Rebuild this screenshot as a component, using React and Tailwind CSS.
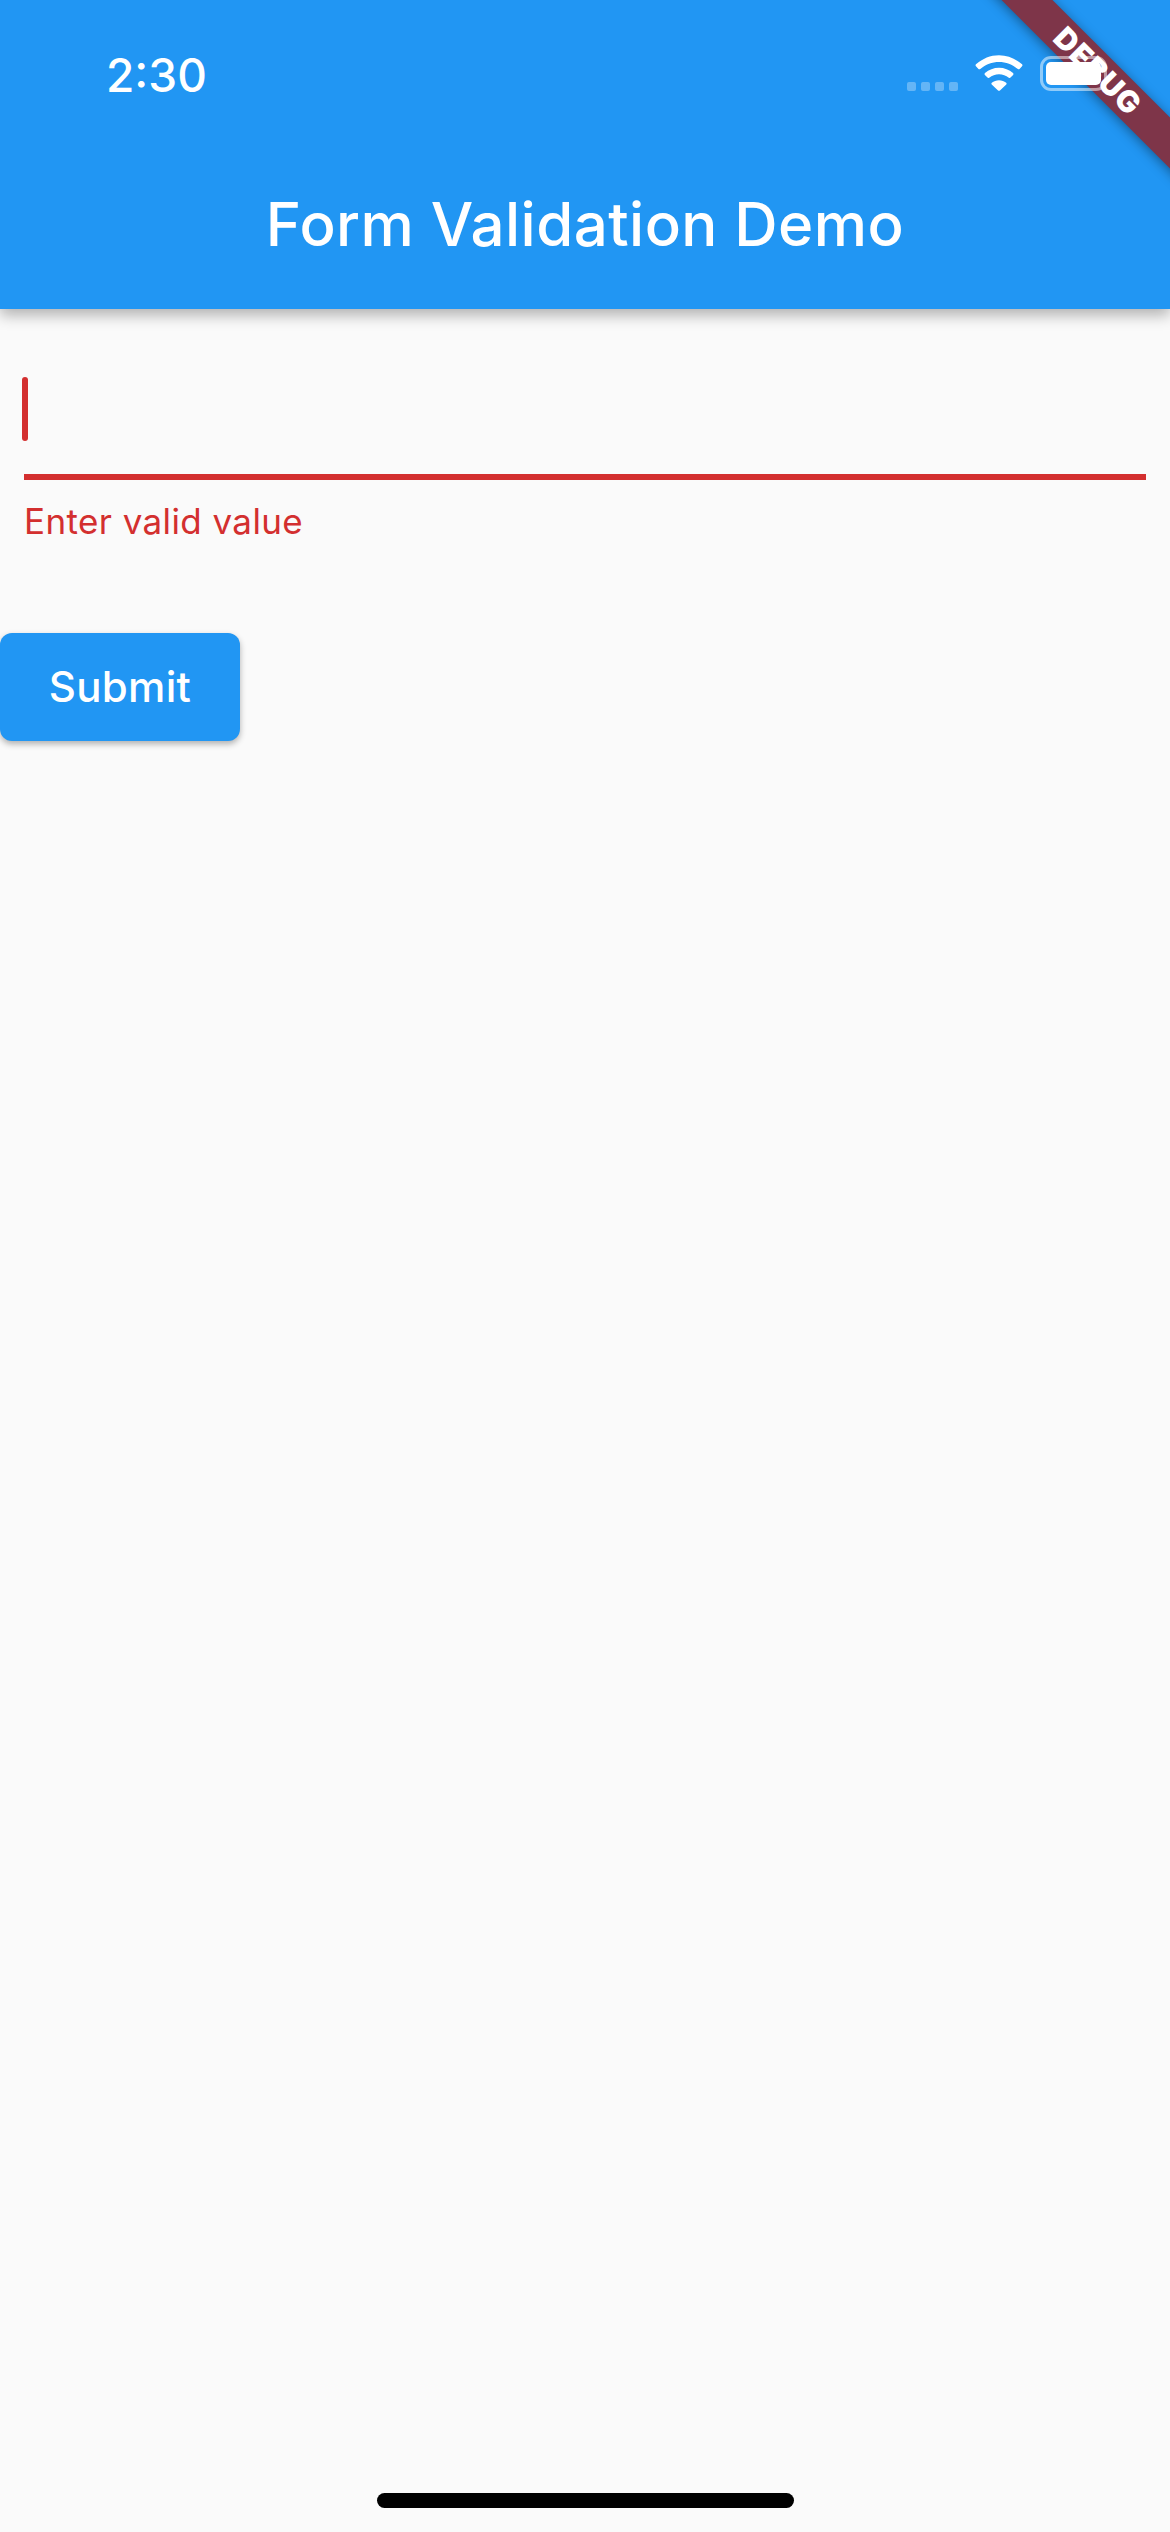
import React from "react";

const App = () => {
  return (
    <div className="relative min-h-[2532px] bg-[#fafafa] overflow-hidden font-['Inter','Roboto',sans-serif]">
      {/* App bar */}
      <div className="h-[309px] bg-[#2196f3] shadow-[0_6px_14px_rgba(0,0,0,0.3)] text-white flex flex-col">
        <div className="h-[150px] flex justify-between items-start pl-[106px] pr-[63px] pt-[50px]">
          <span className="text-[46px] leading-[50px] font-medium">2:30</span>
          <div className="flex items-start mt-[5px]">
            <div className="flex gap-[5px] opacity-30 mt-[27px]">
              <span className="w-[9px] h-[9px] rounded-[2px] bg-white"></span>
              <span className="w-[9px] h-[9px] rounded-[2px] bg-white"></span>
              <span className="w-[9px] h-[9px] rounded-[2px] bg-white"></span>
              <span className="w-[9px] h-[9px] rounded-[2px] bg-white"></span>
            </div>
            <svg className="ml-[17px]" width="48" height="36" viewBox="0 0 50 37" fill="white">
              <path d="M25 0C16 0 8 3.400 1 9.500c-.6.600-.6 1.400 0 2l2.600 2.800c.5.500 1.300.5 1.900 0C11 9.500 17.800 7 25 7s14 2.500 19.500 7.300c.6.500 1.400.5 1.900 0L49 11.500c.6-.6.600-1.400 0-2C42 3.400 34 0 25 0z" />
              <path d="M25 13c-5.500 0-10.600 2-14.600 5.500-.6.500-.6 1.400-.1 2l2.700 2.800c.5.500 1.300.5 1.800.1 2.900-2.300 6.400-3.600 10.200-3.600s7.300 1.300 10.200 3.600c.5.400 1.300.4 1.800-.1l2.700-2.800c.5-.6.500-1.500-.1-2C35.600 15 30.500 13 25 13z" />
              <path d="M25 26c-2.800 0-5.400 1-7.500 2.700-.6.500-.6 1.300-.1 1.900l6.600 6c.5.500 1.500.5 2 0l6.600-6c.5-.6.500-1.400-.1-1.900C30.400 27 27.800 26 25 26z" />
            </svg>
            <div className="relative z-10 ml-[17px] mt-[1px] w-[67px] h-[35px] rounded-[11px] border-[3px] border-white/50 p-[3px]">
              <div className="w-full h-full bg-white rounded-[5px]"></div>
            </div>
          </div>
        </div>
        <div className="flex-1 flex justify-center pt-[39px]">
          <h1 className="text-[60px] leading-[70px] font-medium tracking-[0.45px]">Form Validation Demo</h1>
        </div>
      </div>

      {/* Form */}
      <div className="pt-[68px]">
        <div className="px-[24px]">
          <div className="relative h-[103px] border-b-[6px] border-[#d32f2f]">
            <span className="absolute left-[-2px] top-0 w-[6px] h-[64px] rounded-full bg-[#d32f2f]"></span>
          </div>
          <div className="pt-[15px] text-[35px] leading-[52px] text-[#d32f2f] tracking-[0.4px]">Enter valid value</div>
        </div>
        <button className="mt-[86px] block w-[240px] h-[108px] pb-[2px] rounded-[12px] bg-[#2196f3] text-white text-[42px] font-medium tracking-[0.3px] shadow-[0_3px_6px_rgba(0,0,0,0.3)]">
          Submit
        </button>
      </div>

      {/* Debug banner */}
      <div className="absolute top-[53px] right-[-138px] w-[420px] h-[36px] rotate-45 bg-[#7e3549] shadow-[0_2px_12px_rgba(0,0,0,0.4)] flex items-center justify-center">
        <span className="text-white text-[30px] leading-none font-black tracking-[1px]">DEBUG</span>
      </div>

      {/* Home indicator */}
      <div className="absolute bottom-[24px] left-[377px] w-[417px] h-[15px] rounded-full bg-black"></div>
    </div>
  );
};

export default App;
